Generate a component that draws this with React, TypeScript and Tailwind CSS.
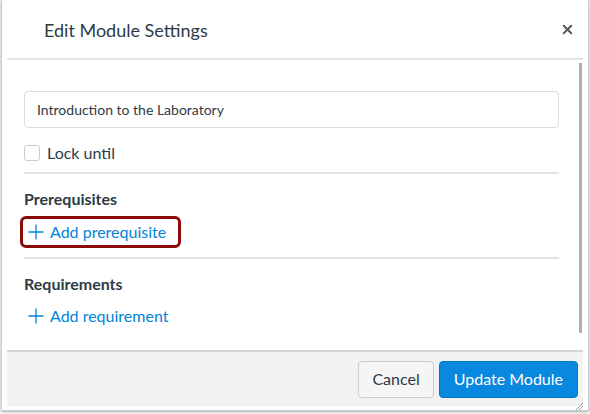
import { X } from "lucide-react";

function PlusIcon() {
  return (
    <svg width="16" height="16" viewBox="0 0 16 16" className="shrink-0">
      <path d="M8 0.5 V15.5 M0.5 8 H15.5" stroke="currentColor" strokeWidth="1.3" />
    </svg>
  );
}

export default function App() {
  return (
    <main className="w-[590px] h-[414px] bg-white font-['Lato','Liberation_Sans',sans-serif] text-[#2d3b45]">
      {/* dialog */}
      <div className="ml-[1px] w-[588px] h-[411px] border border-t-0 border-[#c7cdd1] shadow-[0_1px_3px_rgba(0,0,0,0.35)] bg-white px-[5px] pb-[4px] flex flex-col">
        {/* header */}
        <div className="h-[60px] flex items-center justify-between border-b-2 border-[#e0e4e7] pl-[37px] pr-[6px]">
          <h1 className="text-[18px] leading-none pt-[2px]">Edit Module Settings</h1>
          <button className="w-5 h-5 flex items-center justify-center text-[#555]">
            <X className="w-[15px] h-[15px]" strokeWidth={3} />
          </button>
        </div>

        {/* body */}
        <div className="flex-1 flex min-h-0">
          <div className="flex-1 pl-[17px] pr-[20px] pt-[31px]">
            <div className="h-[37px] border border-[#d7dde2] rounded-[4px] flex items-center px-3 text-[14px]">
              Introduction to the Laboratory
            </div>

            <div className="mt-[15px] flex items-center gap-[7px] pb-[9px] border-b-2 border-[#dfe3e6]">
              <span className="w-[16px] h-[16px] border border-[#c7cdd1] rounded-[3px] bg-white" />
              <span className="text-[16px] leading-5">Lock until</span>
            </div>

            <h2 className="mt-[15px] text-[16px] font-bold leading-5">Prerequisites</h2>
            <div className="mt-[7px] pb-[9px] border-b-2 border-[#dfe3e6]">
              <div className="inline-flex items-center gap-[6px] border-[3px] border-[#8b0a0a] rounded-[6px] h-[32px] pl-[5px] pr-[12px] -ml-[4px] text-[#0084d8] text-[16px]">
                <PlusIcon />
                Add prerequisite
              </div>
            </div>

            <h2 className="mt-[15px] text-[16px] font-bold leading-5">Requirements</h2>
            <div className="mt-[10px] flex items-center gap-[6px] ml-[4px] text-[#0084d8] text-[16px]">
              <PlusIcon />
              Add requirement
            </div>
          </div>
          {/* scrollbar */}
          <div className="w-[3px] mt-[3px] mb-[17px] mr-[1px] bg-[#a8b0b7]" />
        </div>

        {/* footer */}
        <div className="h-[56px] bg-[#f2f2f2] border-t-2 border-[#d6d6d6] flex items-center justify-end gap-[5px] pr-[5px] relative">
          <button className="h-[37px] px-[13px] rounded-[4px] border border-[#c7cdd1] bg-[#f5f5f5] text-[16px] text-[#2d3b45]">
            Cancel
          </button>
          <button className="h-[37px] px-[14px] rounded-[4px] border border-[#0079c1] bg-[#0888df] text-[16px] text-white">
            Update Module
          </button>
          <svg className="absolute right-0 bottom-[-4px]" width="8" height="8" viewBox="0 0 8 8">
            <path d="M1 8 L8 1 M4 8 L8 4" stroke="#999" strokeWidth="1" />
          </svg>
        </div>
      </div>
    </main>
  );
}
